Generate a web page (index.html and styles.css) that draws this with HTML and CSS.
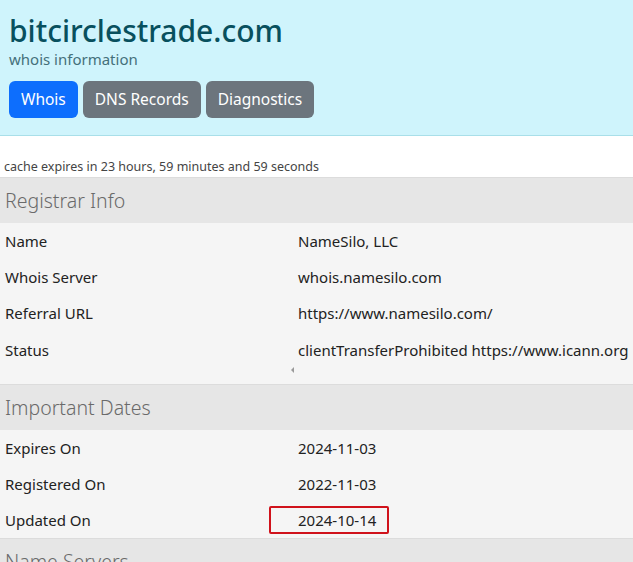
FILE: index.html
```html
<!DOCTYPE html>
<html lang="en">
<head>
    <meta charset="UTF-8">
    <meta name="viewport" content="width=device-width, initial-scale=1.0">
    <title>bitcirclestrade.com whois information</title>
    <link rel="stylesheet" href="styles.css">
</head>
<body>

    <!-- Domain header -->
    <header class="top">
        <h1 class="domain">bitcirclestrade.com</h1>
        <p class="subtitle">whois information</p>
        <nav class="tabs">
            <a class="btn btn-active" href="#">Whois</a>
            <a class="btn" href="#">DNS Records</a>
            <a class="btn" href="#">Diagnostics</a>
        </nav>
    </header>

    <p class="cache">cache expires in 23 hours, 59 minutes and 59 seconds</p>

    <!-- Registrar -->
    <section class="block">
        <h2 class="block-title">Registrar Info</h2>
        <div class="rows">
            <div class="row"><span class="key">Name</span><span class="val">NameSilo, LLC</span></div>
            <div class="row"><span class="key">Whois Server</span><span class="val">whois.namesilo.com</span></div>
            <div class="row"><span class="key">Referral URL</span><span class="val">https://www.namesilo.com/</span></div>
            <div class="row row-scroll">
                <span class="key">Status</span>
                <span class="val val-scroll">clientTransferProhibited https://www.icann.org/epp#clientTransferProhibited</span>
            </div>
        </div>
    </section>

    <!-- Dates -->
    <section class="block">
        <h2 class="block-title">Important Dates</h2>
        <div class="rows">
            <div class="row"><span class="key">Expires On</span><span class="val">2024-11-03</span></div>
            <div class="row"><span class="key">Registered On</span><span class="val">2022-11-03</span></div>
            <div class="row"><span class="key">Updated On</span><span class="val"><span class="mark">2024-10-14</span></span></div>
        </div>
    </section>

    <section class="block">
        <h2 class="block-title">Name Servers</h2>
    </section>

</body>
</html>
```

FILE: styles.css
```css
/* Basic reset */
* {
    margin: 0;
    padding: 0;
    box-sizing: border-box;
}

body {
    font-family: "Segoe UI", "Noto Sans", Arial, sans-serif;
    color: #212529;
    background: #fff;
    overflow: hidden;
}

/* Header */
.top {
    background: #cff4fc;
    border-bottom: 1px solid #a9dfe9;
    padding: 13px 9px 17px;
}

.domain {
    font-size: 30px;
    font-weight: 500;
    line-height: 36px;
    color: #08505e;
}

.subtitle {
    font-size: 15px;
    color: #44707a;
    line-height: 20px;
}

.tabs {
    display: flex;
    gap: 5px;
    margin-top: 12px;
}

.btn {
    display: inline-block;
    padding: 6px 12px;
    font-size: 15.5px;
    line-height: 25px;
    color: #fff;
    background: #6c757d;
    border-radius: 6px;
    text-decoration: none;
}

.btn-active {
    background: #0d6efd;
}

/* Cache note */
.cache {
    font-size: 12.5px;
    color: #444;
    padding: 22px 4px 1px;
    line-height: 18px;
}

/* Sections */
.block-title {
    background: #e6e6e6;
    border-top: 1px solid #dcdcdc;
    font-size: 19.5px;
    font-weight: 300;
    color: #6a6a6a;
    padding: 0 5px;
    line-height: 45px;
}

.rows {
    background: #f5f5f5;
}

.row {
    display: grid;
    grid-template-columns: 293px 1fr;
    padding: 0 5px;
    height: 36px;
    align-items: center;
    font-size: 15px;
    color: #222;
}

.row-scroll {
    position: relative;
    height: 53px;
    align-items: start;
    padding-top: 9px;
}

.val {
    white-space: nowrap;
}

.val-scroll {
    overflow: hidden;
}

/* tiny arrow of the scroll bar */
.row-scroll::after {
    content: '';
    position: absolute;
    left: 291px;
    top: 36px;
    border-top: 3px solid transparent;
    border-bottom: 3px solid transparent;
    border-right: 3px solid #9a9a9a;
}

/* Red annotation around the updated date */
.mark {
    position: relative;
}

.mark::before {
    content: '';
    position: absolute;
    left: -29px;
    right: -13px;
    top: -4px;
    bottom: -4px;
    border: 2px solid #d0121b;
    border-radius: 2px;
}
```
